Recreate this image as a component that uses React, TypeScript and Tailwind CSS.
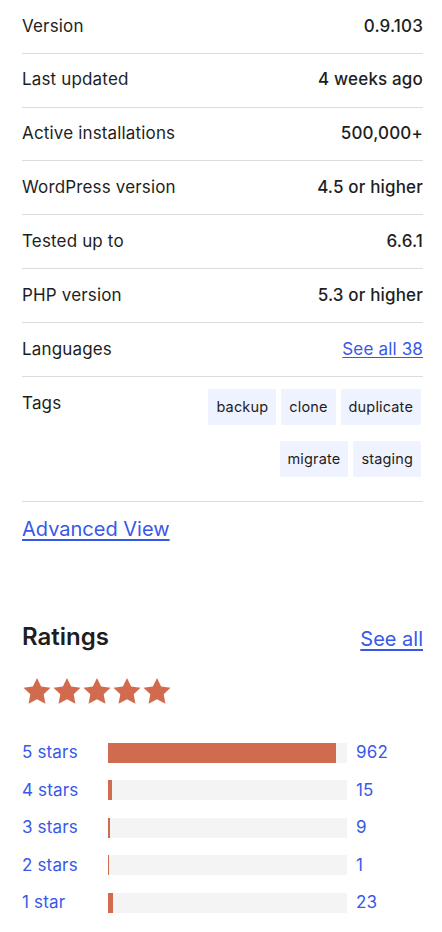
const meta = [
  { label: "Version", value: "0.9.103" },
  { label: "Last updated", value: "4 weeks ago" },
  { label: "Active installations", value: "500,000+" },
  { label: "WordPress version", value: "4.5 or higher" },
  { label: "Tested up to", value: "6.6.1" },
  { label: "PHP version", value: "5.3 or higher" },
];

const tags = ["backup", "clone", "duplicate", "migrate", "staging"];

const ratings = [
  { label: "5 stars", count: 962 },
  { label: "4 stars", count: 15 },
  { label: "3 stars", count: 9 },
  { label: "2 stars", count: 1 },
  { label: "1 star", count: 23 },
];

const Star = () => (
  <svg width="30" height="30" viewBox="0.8 0.4 22.4 22.4">
    <path
      d="M12 1.8l3.1 6.5 7 0.9-5.1 4.9 1.3 7L12 17.7l-6.3 3.4 1.3-7L1.9 9.2l7-0.9L12 1.8z"
      fill="#d26b4e"
    />
  </svg>
);

export default function App() {
  const total = ratings.reduce((sum, r) => sum + r.count, 0);

  return (
    <div className="min-h-[932px] bg-white pl-[22px] pr-[19px] text-[#1e1e1e] tracking-[0.01em] font-['Inter',sans-serif]">
      <div>
        {meta.map((row) => (
          <div
            key={row.label}
            className="flex h-[53.83px] items-center justify-between border-b border-[#dcdcde] text-[17px]"
          >
            <span>{row.label}</span>
            <span className="font-medium">{row.value}</span>
          </div>
        ))}
        <div className="flex h-[53.83px] items-center justify-between border-b border-[#dcdcde] text-[17px]">
          <span>Languages</span>
          <a href="#" className="text-[#3858e9] underline underline-offset-2">
            See all 38
          </a>
        </div>
        <div className="flex justify-between border-b border-[#dcdcde] pt-3 pb-6">
          <span className="text-[17px] leading-6 pt-[2px]">Tags</span>
          <div className="mr-[2px] flex w-[230px] flex-wrap justify-end gap-x-[5px] gap-y-4">
            {tags.map((tag) => (
              <span
                key={tag}
                className="rounded-[2px] bg-[#eff2ff] px-[8px] py-2 text-[14.5px] leading-5"
              >
                {tag}
              </span>
            ))}
          </div>
        </div>
      </div>

      <a
        href="#"
        className="mt-[13px] inline-block text-[20px] leading-7 tracking-normal text-[#3858e9] underline underline-offset-[3px]"
      >
        Advanced View
      </a>

      <div className="mt-[78px] flex items-end justify-between tracking-normal">
        <h2 className="text-[24px] font-semibold leading-8">Ratings</h2>
        <a
          href="#"
          className="text-[20px] leading-7 text-[#3858e9] underline underline-offset-[3px]"
        >
          See all
        </a>
      </div>

      <div className="mt-[23px] flex">
        {[0, 1, 2, 3, 4].map((i) => (
          <Star key={i} />
        ))}
      </div>

      <div className="mt-[35px] flex flex-col gap-[13.5px]">
        {ratings.map((r) => (
          <div key={r.label} className="flex h-6 items-center text-[17px] text-[#3858e9]">
            <span className="w-[86px]">{r.label}</span>
            <div className="h-5 w-[239px] bg-[#f4f4f4]">
              <div
                className="h-full bg-[#d06b4f]"
                style={{ width: `${(r.count / total) * 100}%`, minWidth: r.count > 0 ? 1 : 0 }}
              />
            </div>
            <span className="ml-[9px]">{r.count}</span>
          </div>
        ))}
      </div>
    </div>
  );
}
